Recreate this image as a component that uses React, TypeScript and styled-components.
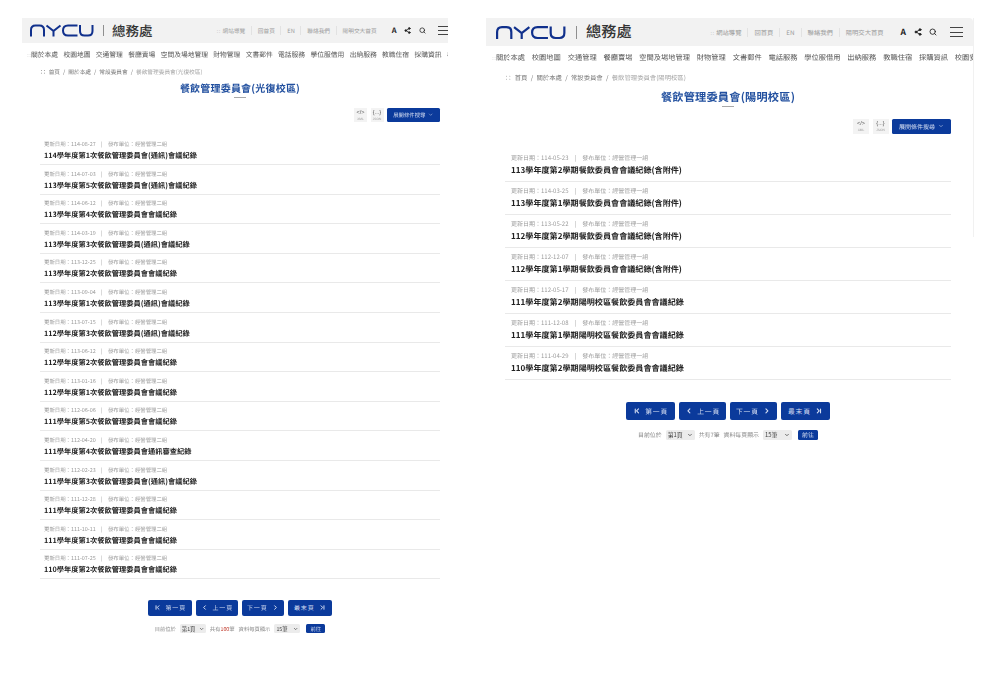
import React from 'react';
import styled, { createGlobalStyle } from 'styled-components';
import { ChevronFirst, ChevronLast, ChevronLeft, ChevronRight, ChevronDown, Search, Share2 } from 'lucide-react';

const Global = createGlobalStyle`
  html, body { margin: 0; padding: 0; background: #fff; overflow: hidden; }
  body {
    font-family: "Noto Sans CJK TC", "Noto Sans", sans-serif;
    text-rendering: geometricPrecision;
  }
`;

const Page = styled.div`
  display: flex;
  align-items: flex-start;
  gap: 38px;
  height: 674px;
  padding: 18px 0 0 22px;
  box-sizing: border-box;
  filter: blur(0.3px);
`;

const Panel = styled.section<{ $w: number; $edge?: boolean }>`
  width: ${p => p.$w}px;
  flex: none;
  position: relative;
  ${p => p.$edge ? 'box-shadow: 1px 0 0 #f1f1f1; height: 219px;' : ''}
`;

const Header = styled.header<{ $h: number; $pl: number; $round?: boolean }>`
  height: ${p => p.$h}px;
  padding-left: ${p => p.$pl}px;
  background: #f2f2f2;
  display: flex;
  align-items: center;
  border-top-right-radius: ${p => p.$round ? 4 : 0}px;
`;

const Logo = styled.svg<{ $w: number; $h: number }>`
  width: ${p => p.$w}px;
  height: ${p => p.$h}px;
  flex: none;
`;

const Sep = styled.span<{ $h: number; $m: string }>`
  width: 1px;
  height: ${p => p.$h}px;
  margin: ${p => p.$m};
  background: #8f8f8f;
  flex: none;
`;

const Office = styled.div<{ $s: number }>`
  font-size: ${p => p.$s}px;
  line-height: 1;
  font-weight: 500;
  color: #333;
  white-space: nowrap;
`;

const TopLinks = styled.div<{ $s: number; $gap: number }>`
  margin-left: auto;
  display: flex;
  align-items: center;
  gap: ${p => p.$gap}px;
  font-size: ${p => p.$s}px;
  color: #9a9a9a;
  white-space: nowrap;
`;

const TopLink = styled.span<{ $gap: number }>`
  & + & {
    border-left: 1px solid #e2e2e2;
    padding-left: ${p => p.$gap}px;
  }
`;

const TopDots = styled.span`
  font-size: 4px;
  margin-right: 2px;
`;

const Tools = styled.div<{ $gap: number; $ml: number; $mr: number; $s: number }>`
  display: flex;
  align-items: center;
  gap: ${p => p.$gap}px;
  margin-left: ${p => p.$ml}px;
  margin-right: ${p => p.$mr}px;
  color: #222;
  font-size: ${p => p.$s}px;
  font-weight: 700;
`;

const Burger = styled.div<{ $w: number; $h: number }>`
  width: ${p => p.$w}px;
  height: ${p => p.$h}px;
  margin-left: 5px;
  border-top: 1px solid #444;
  border-bottom: 1px solid #444;
  display: flex;
  align-items: center;
  flex: none;
  &::before { content: ''; width: 100%; height: 1px; background: #444; }
`;

const Nav = styled.nav<{ $h: number; $pl: number; $s: number; $gap: number }>`
  height: ${p => p.$h}px;
  padding-left: ${p => p.$pl}px;
  display: flex;
  align-items: center;
  gap: ${p => p.$gap}px;
  overflow: hidden;
  font-size: ${p => p.$s}px;
  color: #555;
  white-space: nowrap;
`;

const NavItem = styled.span`
  flex: none;
`;

const Dots = styled.span`
  color: #aaa;
  font-size: 4px;
`;

const Content = styled.div<{ $ml: number; $mr: number }>`
  margin: 0 ${p => p.$mr}px 0 ${p => p.$ml}px;
`;

const Crumbs = styled.div<{ $mt: number; $s: number; $gap: number }>`
  margin-top: ${p => p.$mt}px;
  height: 8px;
  line-height: 8px;
  display: flex;
  gap: ${p => p.$gap}px;
  font-size: ${p => p.$s}px;
  color: #777;
  white-space: nowrap;
`;

const CrumbNow = styled.span`
  color: #a5a5a5;
`;

const Title = styled.h1<{ $mt: number; $s: number; $lh: number }>`
  margin: ${p => p.$mt}px 0 0;
  font-size: ${p => p.$s}px;
  line-height: ${p => p.$lh}px;
  font-weight: 700;
  letter-spacing: 0.2px;
  color: #22509f;
  text-align: center;
`;

const TitleRule = styled.div<{ $mt: number; $w: number }>`
  width: ${p => p.$w}px;
  height: 1px;
  margin: ${p => p.$mt}px auto 0;
  background: #a8a8a8;
`;

const Toolbar = styled.div<{ $mt: number; $h: number; $gap: number }>`
  margin-top: ${p => p.$mt}px;
  height: ${p => p.$h}px;
  display: flex;
  justify-content: flex-end;
  gap: ${p => p.$gap}px;
`;

const Feed = styled.div<{ $w: number }>`
  width: ${p => p.$w}px;
  background: #f3f3f3;
  display: flex;
  flex-direction: column;
  align-items: center;
  justify-content: center;
  font-family: "Liberation Sans", sans-serif;
`;

const FeedGlyph = styled.span`
  height: 7px;
  line-height: 7px;
  font-size: 5.5px;
  color: #555;
`;

const FeedLabel = styled.span`
  height: 4px;
  font-size: 3.2px;
  line-height: 4px;
  color: #999;
`;

const Expand = styled.div<{ $w: number; $s: number }>`
  width: ${p => p.$w}px;
  background: #0b3a9b;
  border-radius: 1.5px;
  color: #d5def2;
  font-size: ${p => p.$s}px;
  display: flex;
  align-items: center;
  justify-content: center;
  gap: 3px;
`;

const List = styled.ul<{ $mt: number }>`
  list-style: none;
  margin: ${p => p.$mt}px 0 0;
  padding: 0;
`;

const Row = styled.li<{ $h: number; $pt: number; $pl: number }>`
  height: ${p => p.$h}px;
  box-sizing: border-box;
  padding: ${p => p.$pt}px 0 0 ${p => p.$pl}px;
  border-bottom: 1px solid #e9e9e9;
`;

const Meta = styled.div<{ $s: number }>`
  height: 8px;
  line-height: 8px;
  display: flex;
  gap: ${p => p.$s}px;
  font-size: ${p => p.$s}px;
  color: #9b9b9b;
  white-space: nowrap;
`;

const RowTitle = styled.div<{ $s: number; $mt: number }>`
  margin-top: ${p => p.$mt}px;
  height: 10px;
  line-height: 10px;
  font-size: ${p => p.$s}px;
  font-weight: 700;
  color: #222;
  white-space: nowrap;
`;

const Pager = styled.div<{ $mt: number; $h: number; $gap: number }>`
  margin-top: ${p => p.$mt}px;
  height: ${p => p.$h}px;
  display: flex;
  justify-content: center;
  gap: ${p => p.$gap}px;
`;

const PageBtn = styled.div<{ $w: number; $s: number }>`
  width: ${p => p.$w}px;
  background: #0b3a9b;
  border-radius: 2px;
  color: #d5def2;
  font-size: ${p => p.$s}px;
  display: flex;
  align-items: center;
  justify-content: center;
  gap: 4.5px;
  letter-spacing: 0.8px;
`;

const Foot = styled.div<{ $mt: number; $h: number; $s: number }>`
  margin-top: ${p => p.$mt}px;
  height: ${p => p.$h}px;
  display: flex;
  align-items: center;
  justify-content: center;
  gap: 4px;
  font-size: ${p => p.$s}px;
  color: #8a8a8a;
  white-space: nowrap;
`;

const PickWrap = styled.span<{ $w: number; $h: number }>`
  position: relative;
  display: block;
  width: ${p => p.$w}px;
  height: ${p => p.$h}px;
  color: #444;
`;

const PickArrow = styled(ChevronDown)`
  position: absolute;
  right: 2px;
  top: 50%;
  transform: translateY(-50%);
  pointer-events: none;
`;

const Pick = styled.select<{ $s: number }>`
  display: block;
  width: 100%;
  height: 100%;
  padding: 0 0 0 2px;
  border: none;
  border-radius: 1.5px;
  appearance: none;
  background: #ececec;
  color: #444;
  font-family: inherit;
  font-size: ${p => p.$s}px;
`;

const Count = styled.span`
  color: #c0392b;
`;

const Go = styled.div<{ $w: number; $h: number; $s: number }>`
  width: ${p => p.$w}px;
  height: ${p => p.$h}px;
  margin-left: 2px;
  background: #0b3a9b;
  border-radius: 1.5px;
  color: #d5def2;
  font-size: ${p => p.$s}px;
  display: flex;
  align-items: center;
  justify-content: center;
`;

const navItems = ['關於本處', '校園地圖', '交通管理', '餐廳賣場', '空間及場地管理', '財物管理', '文書郵件', '電話服務', '學位服借用', '出納服務', '教職住宿', '採購資訊', '校園安全'];

const leftRows: [string, string][] = [
  ['114-08-27', '114學年度第1次餐飲管理委員會(通訊)會議紀錄'],
  ['114-07-03', '113學年度第5次餐飲管理委員會(通訊)會議紀錄'],
  ['114-06-12', '113學年度第4次餐飲管理委員會會議紀錄'],
  ['114-03-19', '113學年度第3次餐飲管理委員(通訊)會議紀錄'],
  ['113-12-25', '113學年度第2次餐飲管理委員會會議紀錄'],
  ['113-09-04', '113學年度第1次餐飲管理委員(通訊)會議紀錄'],
  ['113-07-15', '112學年度第3次餐飲管理委員(通訊)會議紀錄'],
  ['113-06-12', '112學年度第2次餐飲管理委員會會議紀錄'],
  ['113-01-16', '112學年度第1次餐飲管理委員會會議紀錄'],
  ['112-06-06', '111學年度第5次餐飲管理委員會會議紀錄'],
  ['112-04-20', '111學年度第4次餐飲管理委員會通訊審查紀錄'],
  ['112-02-23', '111學年度第3次餐飲管理委員會(通訊)會議紀錄'],
  ['111-12-28', '111學年度第2次餐飲管理委員會會議紀錄'],
  ['111-10-11', '111學年度第1次餐飲管理委員會會議紀錄'],
  ['111-07-25', '110學年度第2次餐飲管理委員會會議紀錄'],
];

const rightRows: [string, string][] = [
  ['114-05-23', '113學年度第2學期餐飲委員會會議紀錄(含附件)'],
  ['114-03-25', '113學年度第1學期餐飲委員會會議紀錄(含附件)'],
  ['113-05-22', '112學年度第2學期餐飲委員會會議紀錄(含附件)'],
  ['112-12-07', '112學年度第1學期餐飲委員會會議紀錄(含附件)'],
  ['112-05-17', '111學年度第2學期陽明校區餐飲委員會會議紀錄'],
  ['111-12-08', '111學年度第1學期陽明校區餐飲委員會會議紀錄'],
  ['111-04-29', '110學年度第2學期陽明校區餐飲委員會會議紀錄'],
];

type Cfg = {
  w: number; edge?: boolean; head: number; pl: number; logoW: number; logoH: number; sepH: number; sepM: string; office: number;
  topS: number; topGap: number; toolGap: number; toolMl: number; toolMr: number; toolS: number; icon: number; burgerW: number; burgerH: number;
  navH: number; navPl: number; navS: number; navGap: number;
  ml: number; mr: number; crumbMt: number; crumbS: number; crumbGap: number; titleMt: number; titleS: number; titleLh: number; ruleMt: number; ruleW: number;
  barMt: number; barH: number; barGap: number; feedW: number; expandW: number; expandS: number;
  listMt: number; rowH: number; rowPt: number; rowPl: number; metaS: number; rowS: number; rowMt: number; unit: string; place: string;
  pagerMt: number; pagerH: number; pagerGap: number; btn: number[]; btnS: number;
  footMt: number; footH: number; footS: number; pick1: number; pick2: number; pickH: number; goW: number; goH: number;
  rows: [string, string][]; total: React.ReactNode;
};

const left: Cfg = {
  w: 426, head: 25, pl: 8, logoW: 64, logoH: 13, sepH: 11, sepM: '0 8px 0 9px', office: 13.5,
  topS: 5.7, topGap: 5.5, toolGap: 7.5, toolMl: 15, toolMr: 0, toolS: 7.5, icon: 7, burgerW: 10, burgerH: 7,
  navH: 22, navPl: 5, navS: 6.75, navGap: 5.4,
  ml: 18, mr: 8, crumbMt: 3, crumbS: 5.7, crumbGap: 3, titleMt: 5, titleS: 10, titleLh: 14, ruleMt: 1.5, ruleW: 12,
  barMt: 10.5, barH: 14, barGap: 3.5, feedW: 13, expandW: 53, expandS: 5.4,
  listMt: 13.4, rowH: 29.6, rowPt: 4.6, rowPl: 4, metaS: 5.4, rowS: 7.25, rowMt: 3, unit: '經營管理二組', place: '光復校區',
  pagerMt: 20.6, pagerH: 16, pagerGap: 4, btn: [44, 42, 42, 44], btnS: 6,
  footMt: 8.5, footH: 9, footS: 5.3, pick1: 26, pick2: 26, pickH: 9, goW: 19, goH: 9,
  rows: leftRows, total: <>共有<Count>100</Count>筆</>,
};

const right: Cfg = {
  w: 487, edge: true, head: 28, pl: 10, logoW: 70, logoH: 15, sepH: 13, sepM: '0 9px 0 10px', office: 15.2,
  topS: 6.3, topGap: 6, toolGap: 7.5, toolMl: 17, toolMr: 10.5, toolS: 8.5, icon: 8, burgerW: 13, burgerH: 8,
  navH: 24, navPl: 6, navS: 7.25, navGap: 6.8,
  ml: 19, mr: 22, crumbMt: 4, crumbS: 6.35, crumbGap: 3.3, titleMt: 7, titleS: 11.2, titleLh: 16, ruleMt: 1, ruleW: 12,
  barMt: 11.5, barH: 15, barGap: 3.5, feedW: 16, expandW: 59, expandS: 6,
  listMt: 15, rowH: 33, rowPt: 5, rowPl: 6, metaS: 6, rowS: 8.1, rowMt: 4, unit: '經營管理一組', place: '陽明校區',
  pagerMt: 22, pagerH: 18, pagerGap: 4, btn: [49, 47, 47, 49], btnS: 6.8,
  footMt: 10, footH: 10, footS: 5.9, pick1: 29, pick2: 29, pickH: 10, goW: 20, goH: 10,
  rows: rightRows, total: <>共有7筆</>,
};

const NycuLogo = ({ w, h }: { w: number; h: number }) => (
  <Logo $w={w} $h={h} viewBox="0 0 128 26" fill="none" stroke="#10308c" strokeWidth="4">
    <path d="M2 25V12Q2 3 11 3H19Q28 3 28 12V25" />
    <path d="M33 3L47 14L61 3M47 14V25" />
    <path d="M95 3H76Q66 3 66 13Q66 23 76 23H95" />
    <path d="M100 2V14Q100 23 109 23H116Q125 23 125 14V2" />
  </Logo>
);

const Select = ({ c, w, label }: { c: Cfg; w: number; label: string }) => (
  <PickWrap $w={w} $h={c.pickH}>
    <Pick $s={c.footS}><option>{label}</option></Pick>
    <PickArrow size={c.footS} strokeWidth={3} />
  </PickWrap>
);

const Site = ({ c }: { c: Cfg }) => (
  <Panel $w={c.w} $edge={c.edge}>
    <Header $h={c.head} $pl={c.pl} $round={c.edge}>
      <NycuLogo w={c.logoW} h={c.logoH} />
      <Sep $h={c.sepH} $m={c.sepM} />
      <Office $s={c.office}>總務處</Office>
      <TopLinks $s={c.topS} $gap={c.topGap}>
        <TopLink $gap={c.topGap}><TopDots>∷</TopDots>網站導覽</TopLink>
        {['回首頁', 'EN', '聯絡我們', '陽明交大首頁'].map(t => <TopLink key={t} $gap={c.topGap}>{t}</TopLink>)}
      </TopLinks>
      <Tools $gap={c.toolGap} $ml={c.toolMl} $mr={c.toolMr} $s={c.toolS}>
        <span>A</span>
        <Share2 size={c.icon} strokeWidth={2.6} fill="#222" />
        <Search size={c.icon} strokeWidth={2.6} />
        <Burger $w={c.burgerW} $h={c.burgerH} />
      </Tools>
    </Header>
    <Nav $h={c.navH} $pl={c.navPl} $s={c.navS} $gap={c.navGap}>
      {navItems.map((t, i) => <NavItem key={t}>{i === 0 && <Dots>∷</Dots>}{t}</NavItem>)}
    </Nav>
    <Content $ml={c.ml} $mr={c.mr}>
      <Crumbs $mt={c.crumbMt} $s={c.crumbS} $gap={c.crumbGap}>
        <span>∷</span><span>首頁</span><span>/</span><span>關於本處</span><span>/</span><span>常設委員會</span><span>/</span>
        <CrumbNow>餐飲管理委員會({c.place})</CrumbNow>
      </Crumbs>
      <Title $mt={c.titleMt} $s={c.titleS} $lh={c.titleLh}>餐飲管理委員會({c.place})</Title>
      <TitleRule $mt={c.ruleMt} $w={c.ruleW} />
      <Toolbar $mt={c.barMt} $h={c.barH} $gap={c.barGap}>
        <Feed $w={c.feedW}><FeedGlyph>&lt;/&gt;</FeedGlyph><FeedLabel>XML</FeedLabel></Feed>
        <Feed $w={c.feedW}><FeedGlyph>{'{...}'}</FeedGlyph><FeedLabel>JSON</FeedLabel></Feed>
        <Expand $w={c.expandW} $s={c.expandS}>展開條件搜尋 <ChevronDown size={c.expandS} /></Expand>
      </Toolbar>
      <List $mt={c.listMt}>
        {c.rows.map(([d, t]) => (
          <Row key={d + t} $h={c.rowH} $pt={c.rowPt} $pl={c.rowPl}>
            <Meta $s={c.metaS}><span>更新日期：{d}</span><span>|</span><span>發布單位：{c.unit}</span></Meta>
            <RowTitle $s={c.rowS} $mt={c.rowMt}>{t}</RowTitle>
          </Row>
        ))}
      </List>
      <Pager $mt={c.pagerMt} $h={c.pagerH} $gap={c.pagerGap}>
        <PageBtn $w={c.btn[0]} $s={c.btnS}><ChevronFirst size={c.btnS + 1} strokeWidth={3.4} />第一頁</PageBtn>
        <PageBtn $w={c.btn[1]} $s={c.btnS}><ChevronLeft size={c.btnS + 1} strokeWidth={3.4} />上一頁</PageBtn>
        <PageBtn $w={c.btn[2]} $s={c.btnS}>下一頁<ChevronRight size={c.btnS + 1} strokeWidth={3.4} /></PageBtn>
        <PageBtn $w={c.btn[3]} $s={c.btnS}>最末頁<ChevronLast size={c.btnS + 1} strokeWidth={3.4} /></PageBtn>
      </Pager>
      <Foot $mt={c.footMt} $h={c.footH} $s={c.footS}>
        目前位於
        <Select c={c} w={c.pick1} label="第1頁" />
        <span>{c.total}</span>
        資料每頁顯示
        <Select c={c} w={c.pick2} label="15筆" />
        <Go $w={c.goW} $h={c.goH} $s={c.footS}>前往</Go>
      </Foot>
    </Content>
  </Panel>
);

export default function App() {
  return (
    <>
      <Global />
      <Page>
        <Site c={left} />
        <Site c={right} />
      </Page>
    </>
  );
}
